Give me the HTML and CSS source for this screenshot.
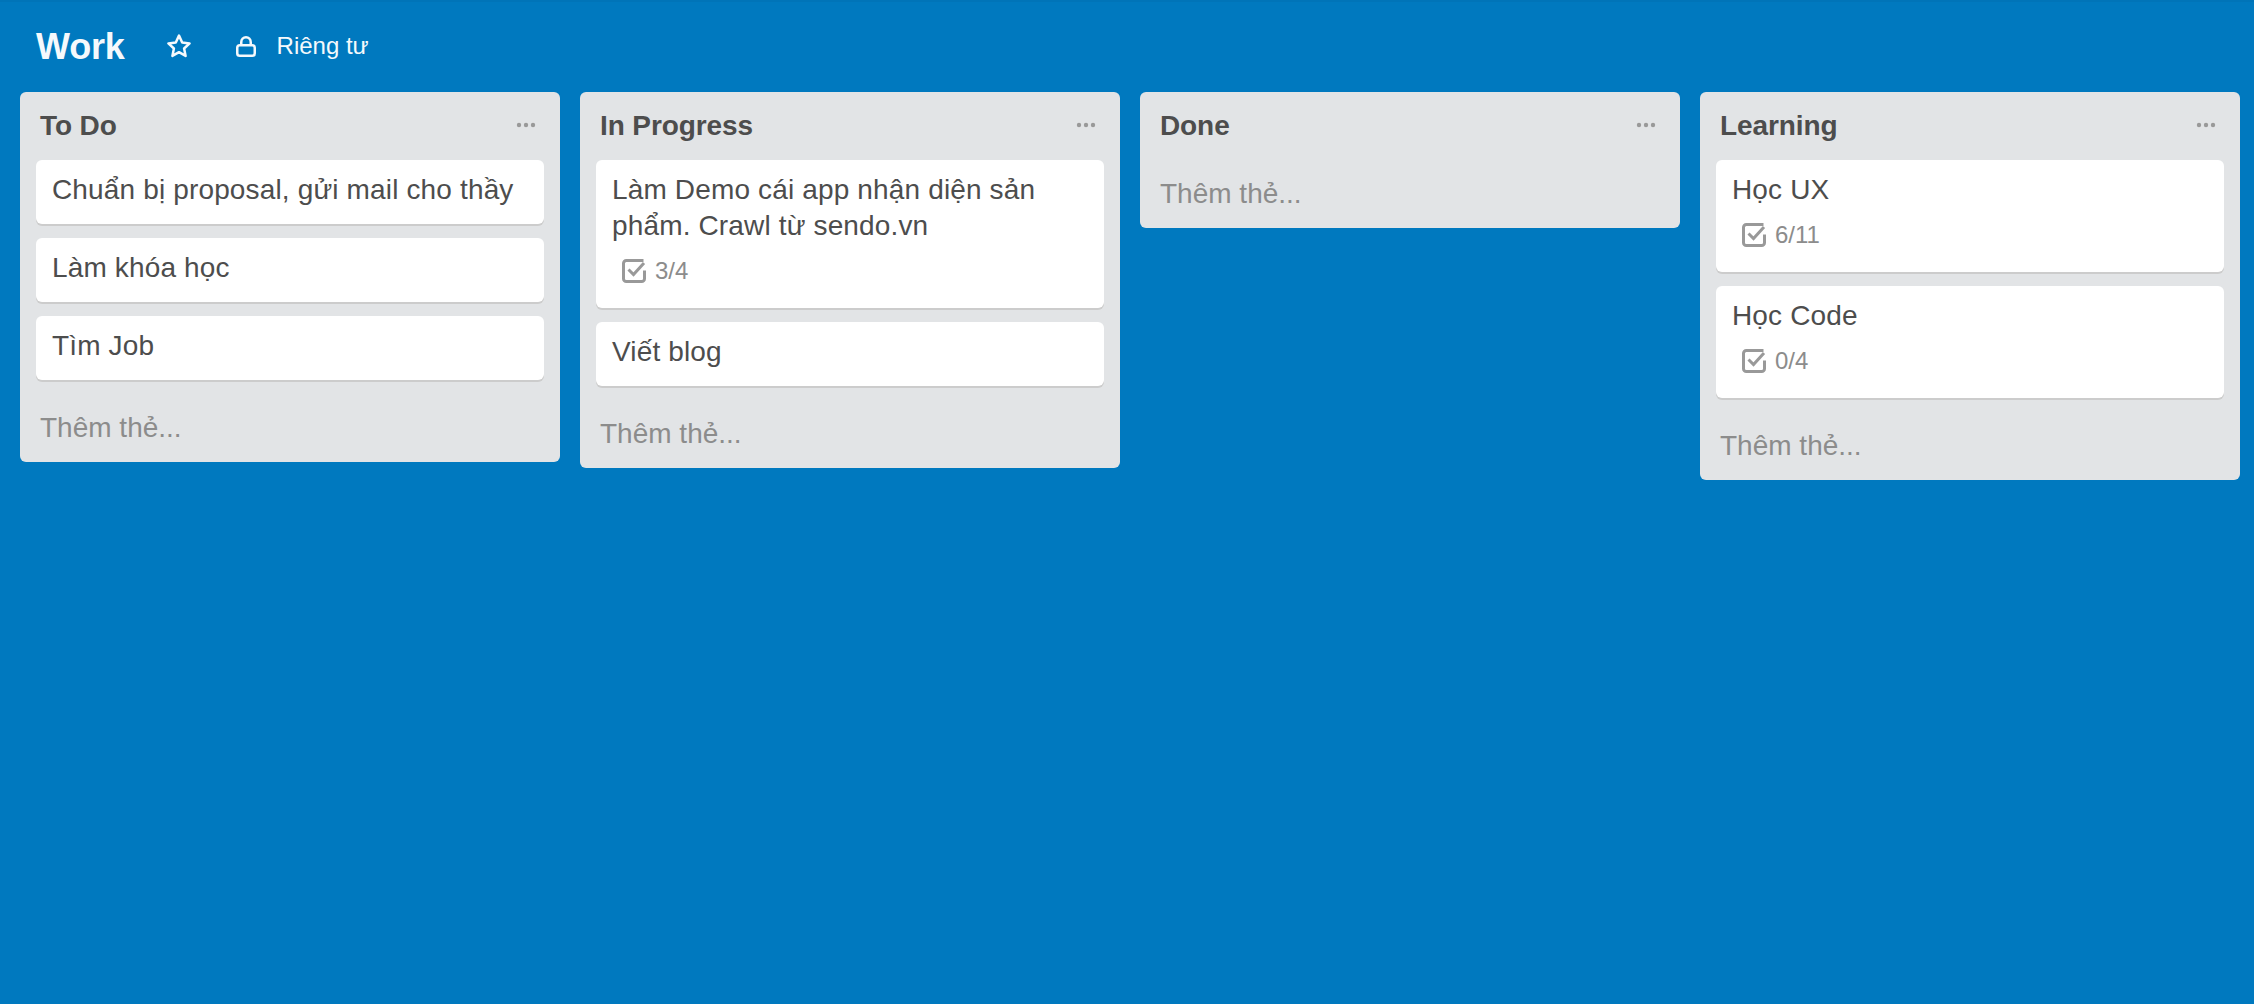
FILE: index.html
```html
<!DOCTYPE html>
<html lang="vi">
<head>
<meta charset="utf-8">
<title>Work</title>
<link rel="stylesheet" href="styles.css">
</head>
<body>
<header class="board-header">
  <h1 class="board-title">Work</h1>
  <svg class="star" viewBox="0 0 26 26" width="26" height="26" aria-hidden="true"><path d="M13 2.6l3.2 6.9 7.4.9-5.5 5.1 1.5 7.4-6.6-3.7-6.6 3.7 1.5-7.4-5.5-5.1 7.4-.9z" fill="none" stroke="#f5f9fc" stroke-width="2.5" stroke-linejoin="round"/></svg>
  <div class="privacy">
    <svg class="lock" viewBox="0 0 20 21" width="20" height="21" aria-hidden="true"><rect x="1.25" y="9.25" width="17.5" height="10.5" rx="2.6" fill="none" stroke="#f5f9fc" stroke-width="2.5"/><path d="M5.25 9.25V6.2a4.75 4.95 0 0 1 9.5 0v3.05" fill="none" stroke="#f5f9fc" stroke-width="2.5"/></svg>
    <span>Riêng tư</span>
  </div>
</header>
<main class="board">
  <section class="list">
    <div class="list-head"><h2>To Do</h2><svg class="dots" viewBox="0 0 20 6" width="20" height="6" aria-hidden="true"><circle cx="3" cy="3" r="2.2"/><circle cx="10" cy="3" r="2.2"/><circle cx="17" cy="3" r="2.2"/></svg></div>
    <div class="cards">
      <article class="card"><p>Chuẩn bị proposal, gửi mail cho thầy</p></article>
      <article class="card"><p>Làm khóa học</p></article>
      <article class="card"><p>Tìm Job</p></article>
    </div>
    <div class="add">Thêm thẻ...</div>
  </section>
  <section class="list">
    <div class="list-head"><h2>In Progress</h2><svg class="dots" viewBox="0 0 20 6" width="20" height="6" aria-hidden="true"><circle cx="3" cy="3" r="2.2"/><circle cx="10" cy="3" r="2.2"/><circle cx="17" cy="3" r="2.2"/></svg></div>
    <div class="cards">
      <article class="card"><p>Làm Demo cái app nhận diện sản phẩm. Crawl từ sendo.vn</p>
        <div class="badge"><svg class="check" viewBox="0 0 24 24" width="24" height="24" aria-hidden="true"><path d="M22.5 11.5v8.2a2.8 2.8 0 0 1-2.8 2.8H4.3a2.8 2.8 0 0 1-2.8-2.8V4.3a2.8 2.8 0 0 1 2.8-2.8h17.2" fill="none" stroke="#999" stroke-width="3"/><path d="M6.5 10.5l5 5L22 4" fill="none" stroke="#999" stroke-width="3"/></svg><span>3/4</span></div>
      </article>
      <article class="card"><p>Viết blog</p></article>
    </div>
    <div class="add">Thêm thẻ...</div>
  </section>
  <section class="list">
    <div class="list-head"><h2>Done</h2><svg class="dots" viewBox="0 0 20 6" width="20" height="6" aria-hidden="true"><circle cx="3" cy="3" r="2.2"/><circle cx="10" cy="3" r="2.2"/><circle cx="17" cy="3" r="2.2"/></svg></div>
    <div class="add">Thêm thẻ...</div>
  </section>
  <section class="list">
    <div class="list-head"><h2>Learning</h2><svg class="dots" viewBox="0 0 20 6" width="20" height="6" aria-hidden="true"><circle cx="3" cy="3" r="2.2"/><circle cx="10" cy="3" r="2.2"/><circle cx="17" cy="3" r="2.2"/></svg></div>
    <div class="cards">
      <article class="card"><p>Học UX</p>
        <div class="badge"><svg class="check" viewBox="0 0 24 24" width="24" height="24" aria-hidden="true"><path d="M22.5 11.5v8.2a2.8 2.8 0 0 1-2.8 2.8H4.3a2.8 2.8 0 0 1-2.8-2.8V4.3a2.8 2.8 0 0 1 2.8-2.8h17.2" fill="none" stroke="#999" stroke-width="3"/><path d="M6.5 10.5l5 5L22 4" fill="none" stroke="#999" stroke-width="3"/></svg><span>6/11</span></div>
      </article>
      <article class="card"><p>Học Code</p>
        <div class="badge"><svg class="check" viewBox="0 0 24 24" width="24" height="24" aria-hidden="true"><path d="M22.5 11.5v8.2a2.8 2.8 0 0 1-2.8 2.8H4.3a2.8 2.8 0 0 1-2.8-2.8V4.3a2.8 2.8 0 0 1 2.8-2.8h17.2" fill="none" stroke="#999" stroke-width="3"/><path d="M6.5 10.5l5 5L22 4" fill="none" stroke="#999" stroke-width="3"/></svg><span>0/4</span></div>
      </article>
    </div>
    <div class="add">Thêm thẻ...</div>
  </section>
</main>
</body>
</html>
```
FILE: styles.css
```css
* { box-sizing: border-box; }
html, body { height: 100%; }
body {
  margin: 0;
  background: #0079bf;
  font-family: "Liberation Sans", Arial, sans-serif;
  color: #4d4d4d;
  overflow: hidden;
}
.board-header {
  height: 92px;
  padding: 0 0 0 36px;
  display: flex;
  align-items: center;
  color: #f5f9fc;
  box-shadow: inset 0 2px 0 #0074b8;
}
.board-title {
  margin: 2px 41px 0 0;
  font-size: 36px;
  font-weight: 700;
  letter-spacing: -0.2px;
}
.star { margin-right: 44px; }
.privacy {
  display: flex;
  align-items: center;
  gap: 21px;
  font-size: 24px;
}
.board {
  display: flex;
  align-items: flex-start;
  gap: 20px;
  padding: 0 14px 0 20px;
}
.list {
  flex: 0 0 540px;
  background: #e2e4e6;
  border-radius: 6px;
}
.list-head {
  height: 68px;
  padding: 0 24px 0 20px;
  display: flex;
  align-items: center;
  justify-content: space-between;
}
.list-head h2 {
  margin: 0;
  font-size: 28px;
  font-weight: 700;
  letter-spacing: -0.1px;
  color: #4d4d4d;
}
.dots { fill: #999; margin-bottom: 2px; }
.cards {
  display: flex;
  flex-direction: column;
  gap: 14px;
  padding: 0 16px 14px;
}
.card {
  background: #fff;
  border-radius: 6px;
  box-shadow: 0 2px 0 #ccc;
  padding: 12px 16px 16px;
}
.card p {
  margin: 0;
  font-size: 28px;
  line-height: 36px;
  letter-spacing: 0.15px;
  color: #4d4d4d;
}
.badge {
  display: flex;
  align-items: center;
  gap: 9px;
  height: 36px;
  margin: 9px 0 3px;
  padding-left: 10px;
  font-size: 24px;
  color: #8c8c8c;
}
.add {
  height: 68px;
  padding: 0 20px 0;
  display: flex;
  align-items: center;
  font-size: 28px;
  color: #8c8c8c;
}
```
